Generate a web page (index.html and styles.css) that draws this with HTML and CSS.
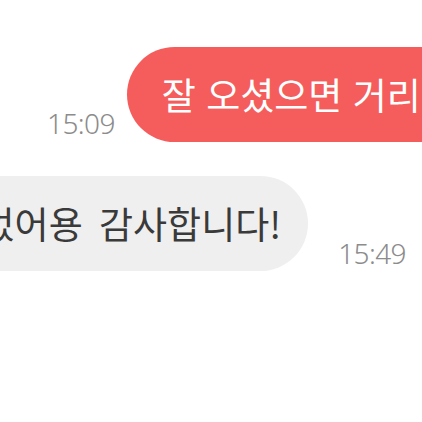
FILE: index.html
```html
<!DOCTYPE html>
<html lang="ko">
<head>
    <meta charset="UTF-8">
    <meta name="viewport" content="width=device-width, initial-scale=1.0">
    <title>채팅</title>
    <link rel="stylesheet" href="styles.css">
</head>
<body>
    <div class="chat">
        <div class="row sent">
            <span class="time">15:09</span>
            <div class="bubble mine">잘 오셨으면 거리 두기 잘 지켜주세요</div>
        </div>
        <div class="row received">
            <div class="bubble theirs">맛있었어용 감사합니다!</div>
            <span class="time">15:49</span>
        </div>
    </div>
</body>
</html>
```
FILE: styles.css
```css
body {
    margin: 0;
    background: #fff;
    font-family: "Noto Sans CJK KR", "Noto Sans", sans-serif;
}
.chat {
    width: 422px;
    height: 422px;
    overflow: hidden;
    padding-top: 47px;
    box-sizing: border-box;
}
.row {
    display: flex;
    align-items: flex-end;
}
.sent {
    padding-left: 47px;
}
.received {
    justify-content: flex-end;
    padding-right: 16px;
    margin-top: 34px;
}
.bubble {
    flex-shrink: 0;
    white-space: nowrap;
    font-size: 37px;
    font-weight: 400;
    line-height: 57px;
    padding: 19px 30px 19px 35px;
    border-radius: 48px;
}
.mine {
    background: #f45d5c;
    color: #fff;
    margin-left: 12px;
}
.theirs {
    background: #efefef;
    color: #3a3a3a;
    padding-right: 27px;
    word-spacing: 6px;
}
.time {
    font-family: "Noto Sans", sans-serif;
    font-weight: 300;
    font-size: 28px;
    letter-spacing: -0.6px;
    color: #8c8c8c;
    line-height: 1;
    margin-bottom: 5px;
}
.received .time {
    margin-left: 30px;
    margin-bottom: 4px;
}
```
